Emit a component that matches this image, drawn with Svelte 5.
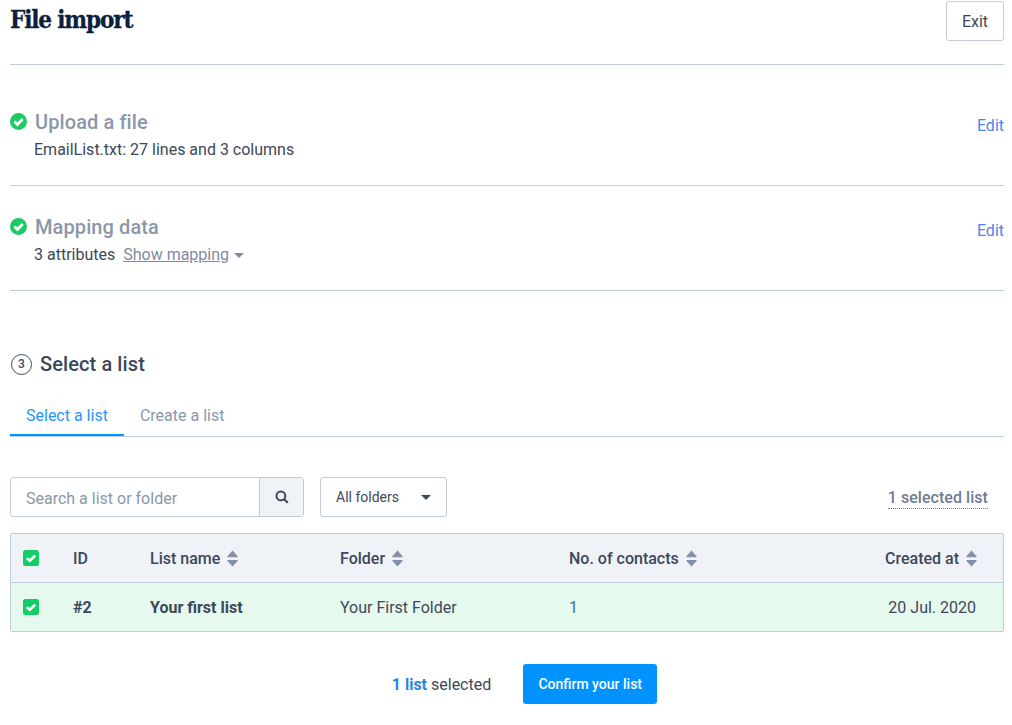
<script>
  const columns = [
    { label: 'List name', cls: 'name' },
    { label: 'Folder', cls: 'folder' },
    { label: 'No. of contacts', cls: 'count' }
  ];
</script>

{#snippet check()}
  <svg class="circle-check" viewBox="0 0 17 17" width="17" height="17" aria-hidden="true">
    <circle cx="8.5" cy="8.5" r="8.5" fill="#1fca66" />
    <path d="M4.4 8.6 7.4 11.5 12.7 6" fill="none" stroke="#fff" stroke-width="2.8" />
  </svg>
{/snippet}

{#snippet box()}
  <svg class="box" viewBox="0 0 16 16" width="16" height="16" aria-hidden="true">
    <rect width="16" height="16" rx="2.5" fill="#13ce66" />
    <path d="M3.8 8.2 6.8 10.8 12.2 5.6" fill="none" stroke="#fff" stroke-width="2.6" />
  </svg>
{/snippet}

{#snippet sort()}
  <svg class="sort" viewBox="0 0 11 17" width="11" height="17" aria-hidden="true">
    <path d="M5.5 0.5 10.8 6.5Q11 7.2 10 7.2H1Q0 7.2 0.2 6.5Z M1 10H10Q11 10 10.8 10.7L5.5 16.5 0.2 10.7Q0 10 1 10Z" fill="#8390a6" />
  </svg>
{/snippet}

<main class="page">
  <header class="top">
    <h1>File import</h1>
    <button class="exit">Exit</button>
  </header>

  <section class="done first">
    <div class="done-body">
      <h2>{@render check()}<span>Upload a file</span></h2>
      <p>EmailList.txt: 27 lines and 3 columns</p>
    </div>
    <a class="edit" href="#edit">Edit</a>
  </section>

  <section class="done">
    <div class="done-body">
      <h2>{@render check()}<span>Mapping data</span></h2>
      <p>3 attributes <a class="show" href="#map">Show mapping</a><i class="caret grey"></i></p>
    </div>
    <a class="edit" href="#edit">Edit</a>
  </section>

  <h3 class="current"><span class="num">3</span>Select a list</h3>

  <nav class="tabs">
    <span class="tab active">Select a list</span>
    <span class="tab">Create a list</span>
  </nav>

  <div class="tools">
    <div class="search">
      <span class="placeholder">Search a list or folder</span>
      <span class="search-btn">
        <svg viewBox="0 0 14 14" width="14" height="14" aria-hidden="true">
          <circle cx="5.9" cy="5.9" r="4.4" fill="none" stroke="#3d4859" stroke-width="2" />
          <path d="M9.2 9.2 12.8 12.8" stroke="#3d4859" stroke-width="2.2" />
        </svg>
      </span>
    </div>
    <div class="select">All folders<i class="caret dark"></i></div>
    <span class="selected-link">1 selected list</span>
  </div>

  <div class="table">
    <div class="row head">
      <div class="c-check">{@render box()}</div>
      <div class="c-id">ID</div>
      {#each columns as col}
        <div class="c-{col.cls}">{col.label}{@render sort()}</div>
      {/each}
      <div class="c-date">Created at{@render sort()}</div>
    </div>
    <div class="row body">
      <div class="c-check">{@render box()}</div>
      <div class="c-id strong">#2</div>
      <div class="c-name strong">Your first list</div>
      <div class="c-folder">Your First Folder</div>
      <div class="c-count teal">1</div>
      <div class="c-date">20 Jul. 2020</div>
    </div>
  </div>

  <footer class="foot">
    <span class="summary"><b>1 list</b> selected</span>
    <button class="confirm">Confirm your list</button>
  </footer>
</main>

<style>
  :global(body) {
    margin: 0;
    background: #fff;
    font-family: Roboto, "Liberation Sans", sans-serif;
    color: #3d4859;
  }
  .page {
    padding: 1px 8px 21px 10px;
    font-size: 16px;
  }
  .top {
    display: flex;
    justify-content: space-between;
    align-items: flex-start;
    height: 63px;
    border-bottom: 1px solid #bfccdb;
  }
  h1 {
    margin: 3px 0 0;
    font: 700 24px/32px "DejaVu Serif Condensed", "DejaVu Serif", serif;
    letter-spacing: -1.15px;
    color: #0b1f3f;
    -webkit-text-stroke: 0.3px #0b1f3f;
  }
  .exit {
    width: 58px;
    height: 40px;
    padding: 0;
    background: #fff;
    border: 1px solid #bfccdb;
    border-radius: 3px;
    font: 400 16px Roboto, sans-serif;
    color: #3d4859;
  }
  .done {
    display: flex;
    justify-content: space-between;
    align-items: flex-start;
    height: 104px;
    border-bottom: 1px solid #bfccdb;
  }
  .done.first {
    height: 120px;
  }
  .done-body {
    margin-top: 27px;
  }
  .first .done-body {
    margin-top: 43px;
  }
  h2 {
    display: flex;
    align-items: center;
    gap: 8px;
    margin: 0;
    font: 500 20px/28px Roboto, sans-serif;
    letter-spacing: 0.1px;
    color: #8b97a9;
  }
  .circle-check {
    margin-top: -1px;
  }
  .done p {
    margin: 4px 0 0 24px;
    font-size: 16px;
    line-height: 20px;
    white-space: nowrap;
  }
  .show {
    margin-left: 4px;
    color: #7f8b9e;
    text-decoration: underline;
  }
  .edit {
    color: #4a85f2;
    font-size: 16px;
    line-height: 20px;
    text-decoration: none;
  }
  .done:not(.first) .edit {
    margin-top: 35px;
  }
  .first .edit {
    margin-top: 51px;
  }
  .caret {
    display: inline-block;
    width: 0;
    height: 0;
    border-left: 5px solid transparent;
    border-right: 5px solid transparent;
    border-top: 5px solid #7f8b9e;
  }
  .caret.grey {
    margin-left: 5px;
    vertical-align: 2px;
  }
  .current {
    display: flex;
    align-items: center;
    gap: 8px;
    margin: 59px 0 0;
    font: 500 20px/28px Roboto, sans-serif;
    letter-spacing: 0.1px;
    color: #3d4859;
  }
  .num {
    box-sizing: border-box;
    width: 21px;
    height: 21px;
    margin-left: 1px;
    border: 1.6px solid #3d4859;
    border-radius: 50%;
    font: 500 12px/18px Roboto, sans-serif;
    letter-spacing: 0;
    text-align: center;
  }
  .tabs {
    display: flex;
    margin-top: 17px;
    height: 41px;
    border-bottom: 1px solid #bfccdb;
  }
  .tab {
    padding: 0 16px;
    height: 41px;
    line-height: 41px;
    color: #8b97a9;
    box-sizing: border-box;
  }
  .tab.active {
    color: #2694ff;
    border-bottom: 2px solid #0092ff;
  }
  .tools {
    display: flex;
    align-items: center;
    margin-top: 40px;
    height: 40px;
  }
  .search {
    display: flex;
    box-sizing: border-box;
    width: 294px;
    height: 40px;
    border: 1px solid #bfccdb;
    border-radius: 3px;
  }
  .placeholder {
    flex: 1;
    padding-left: 15px;
    line-height: 41px;
    color: #8b97a9;
  }
  .search-btn {
    display: flex;
    align-items: center;
    justify-content: center;
    width: 43px;
    background: #eff2f7;
    border-left: 1px solid #bfccdb;
    border-radius: 0 2px 2px 0;
  }
  .select {
    display: flex;
    align-items: center;
    justify-content: space-between;
    box-sizing: border-box;
    width: 127px;
    height: 40px;
    margin-left: 16px;
    padding: 0 15px;
    border: 1px solid #bfccdb;
    border-radius: 3px;
    font-size: 14px;
  }
  .caret.dark {
    border-top-color: #3d4859;
  }
  .selected-link {
    margin-left: auto;
    margin-right: 16px;
    margin-top: 2px;
    color: #6f7b8f;
    font-weight: 500;
    font-size: 16px;
    line-height: 20px;
    letter-spacing: 0.05px;
    border-bottom: 1px dotted #6f7b8f;
  }
  .table {
    margin-top: 16px;
    border: 1px solid #bfccdb;
    border-radius: 2px;
  }
  .row {
    display: flex;
    align-items: center;
    height: 48px;
    white-space: nowrap;
  }
  .head {
    background: #eff2f7;
    border-bottom: 1px solid #bfccdb;
    font-weight: 500;
  }
  .body {
    background: #e5f9ee;
  }
  .row > div {
    display: flex;
    align-items: center;
  }
  .c-check { width: 62px; padding-left: 12px; box-sizing: border-box; }
  .c-id { width: 77px; }
  .c-name { width: 190px; }
  .c-folder { width: 229px; }
  .c-count { width: 200px; }
  .row > .c-date {
    flex: 1;
    justify-content: flex-end;
    padding-right: 26px;
  }
  .body > .c-date { padding-right: 27px; }
  .sort { margin-left: 7px; }
  .strong { font-weight: 700; }
  .teal { color: #3d6f86; }
  .foot {
    display: flex;
    align-items: center;
    justify-content: center;
    gap: 32px;
    margin-top: 32px;
    padding-left: 35px;
  }
  .summary b { color: #2487e6; font-weight: 700; }
  .confirm {
    width: 134px;
    height: 40px;
    padding: 0;
    border: 0;
    border-radius: 3px;
    background: #0092ff;
    color: #fff;
    font: 500 14px Roboto, sans-serif;
  }
</style>
